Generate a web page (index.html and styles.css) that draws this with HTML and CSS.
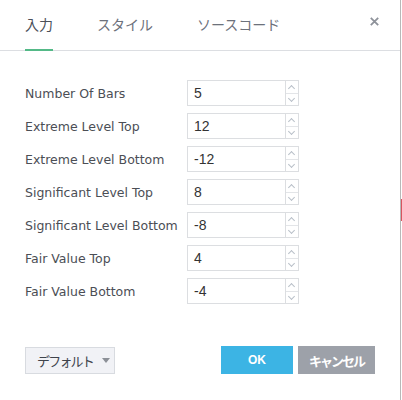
FILE: index.html
```html
<!DOCTYPE html>
<html lang="ja">
<head>
<meta charset="utf-8">
<link rel="stylesheet" href="styles.css">
</head>
<body>
<div class="dialog">
  <div class="header">
    <div class="tab active">入力</div>
    <div class="tab">スタイル</div>
    <div class="tab">ソースコード</div>
    <div class="close">
      <svg width="9" height="9" viewBox="0 0 9 9"><path d="M0.8 0.8 L8.2 8.2 M8.2 0.8 L0.8 8.2" stroke="#8e929a" stroke-width="1.8" fill="none"/></svg>
    </div>
  </div>
  <div class="content">
    <div class="row"><span class="label">Number Of Bars</span><div class="spin"><span class="val">5</span><div class="arrows"><span class="up"></span><span class="down"></span></div></div></div>
    <div class="row"><span class="label">Extreme Level Top</span><div class="spin"><span class="val">12</span><div class="arrows"><span class="up"></span><span class="down"></span></div></div></div>
    <div class="row"><span class="label">Extreme Level Bottom</span><div class="spin"><span class="val">-12</span><div class="arrows"><span class="up"></span><span class="down"></span></div></div></div>
    <div class="row"><span class="label">Significant Level Top</span><div class="spin"><span class="val">8</span><div class="arrows"><span class="up"></span><span class="down"></span></div></div></div>
    <div class="row"><span class="label">Significant Level Bottom</span><div class="spin"><span class="val">-8</span><div class="arrows"><span class="up"></span><span class="down"></span></div></div></div>
    <div class="row"><span class="label">Fair Value Top</span><div class="spin"><span class="val">4</span><div class="arrows"><span class="up"></span><span class="down"></span></div></div></div>
    <div class="row"><span class="label">Fair Value Bottom</span><div class="spin"><span class="val">-4</span><div class="arrows"><span class="up"></span><span class="down"></span></div></div></div>
  </div>
  <div class="footer">
    <div class="defaults">デフォルト<span class="caret"></span></div>
    <div class="spacer"></div>
    <div class="btn ok">OK</div>
    <div class="btn cancel">キャンセル</div>
  </div>
</div>
<div class="edge"><span class="mark"></span></div>
</body>
</html>
```

FILE: styles.css
```css
html, body {
  margin: 0;
  padding: 0;
  background: #fff;
}
body {
  display: flex;
  width: 402px;
  height: 400px;
  overflow: hidden;
  font-family: "DejaVu Sans", "Noto Sans CJK JP", sans-serif;
}
.dialog {
  width: 400px;
  height: 400px;
  background: #fff;
  display: flex;
  flex-direction: column;
}
.edge {
  width: 2px;
  height: 400px;
  background: #fff;
  border-left: 1px solid #b8b8b8;
  box-sizing: border-box;
  display: flex;
  flex-direction: column;
  padding-top: 199px;
}
.mark {
  display: block;
  width: 1px;
  height: 22px;
  background: #d9545e;
}
.header {
  height: 50px;
  border-bottom: 1px solid #dcdee2;
  display: flex;
  padding-left: 25px;
  align-items: stretch;
}
.tab {
  font-family: "Noto Sans CJK JP", sans-serif;
  font-size: 14px;
  line-height: 16px;
  padding-top: 16px;
  margin-right: 44px;
  color: #6c717b;
  box-sizing: border-box;
}
.tab.active {
  color: #4b505a;
  border-bottom: 2px solid #53b987;
  margin-bottom: -1px;
}
.close {
  margin-left: auto;
  margin-right: 21px;
  padding-top: 17px;
}
.close svg {
  display: block;
}
.content {
  padding: 29px 0 0 25px;
  display: flex;
  flex-direction: column;
  gap: 7px;
}
.row {
  display: grid;
  grid-template-columns: 162px 112px;
  align-items: center;
  height: 26px;
}
.label {
  font-family: "DejaVu Sans", sans-serif;
  font-size: 12.5px;
  color: #4b4e55;
  white-space: nowrap;
}
.spin {
  height: 26px;
  box-sizing: border-box;
  border: 1px solid #dcdee1;
  display: flex;
}
.val {
  flex: 1;
  font-family: "Liberation Sans", sans-serif;
  font-size: 14px;
  color: #333;
  line-height: 24px;
  padding-left: 6px;
}
.arrows {
  width: 12px;
  border-left: 1px solid #dcdee1;
  display: flex;
  flex-direction: column;
}
.arrows span {
  flex: 1;
  position: relative;
}
.arrows .up {
  border-bottom: 1px solid #e3e5e8;
}
.arrows span::after {
  content: "";
  position: absolute;
  left: 3px;
  width: 4px;
  height: 4px;
  border-left: 1px solid #b9c0c8;
  border-top: 1px solid #b9c0c8;
}
.arrows .up::after {
  top: 5px;
  transform: rotate(45deg);
}
.arrows .down::after {
  top: 2px;
  transform: rotate(-135deg);
}
.footer {
  display: flex;
  align-items: center;
  padding: 0 25px;
  margin-top: 42px;
  height: 28px;
}
.spacer {
  flex: 1;
}
.defaults {
  width: 90px;
  height: 27px;
  box-sizing: border-box;
  border: 1px solid #d8dbe0;
  background: #f1f2f6;
  font-family: "Noto Sans CJK JP", sans-serif;
  font-size: 13px;
  letter-spacing: -1.8px;
  color: #3e434b;
  display: flex;
  align-items: center;
  padding-left: 11px;
}
.caret {
  margin-left: 9px;
  width: 0;
  height: 0;
  border-left: 4.5px solid transparent;
  border-right: 4.5px solid transparent;
  border-top: 5px solid #8c9097;
}
.btn {
  height: 28px;
  display: flex;
  align-items: center;
  justify-content: center;
  color: #fff;
  font-weight: bold;
  font-family: "Noto Sans CJK JP", sans-serif;
  font-size: 12px;
}
.ok {
  width: 72px;
  background: #3cb4e4;
  margin-right: 5px;
  font-family: "Liberation Sans", sans-serif;
  font-size: 12px;
}
.cancel {
  width: 77px;
  background: #9da1a9;
  font-size: 13px;
  letter-spacing: -2px;
}
```
